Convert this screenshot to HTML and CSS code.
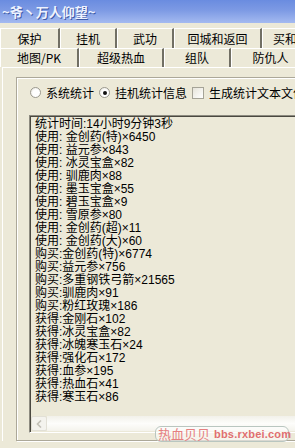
FILE: index.html
```html
<!DOCTYPE html>
<html lang="zh-CN">
<head>
    <meta charset="UTF-8">
    <meta name="viewport" content="width=device-width, initial-scale=1.0">
    <title>~爷丶万人仰望~</title>
    <link rel="stylesheet" href="styles.css">
</head>
<body>
    <div class="window">
        <div class="titlebar"><span class="title">~爷丶万人仰望~</span></div>

        <div class="tabs">
            <div class="tab-row row-top">
                <div class="tab">保护</div>
                <div class="tab">挂机</div>
                <div class="tab">武功</div>
                <div class="tab">回城和返回</div>
                <div class="tab">买和卖</div>
            </div>
            <div class="tab-row row-bottom">
                <div class="tab">地图/PK</div>
                <div class="tab">超级热血</div>
                <div class="tab">组队</div>
                <div class="tab">防仇人</div>
            </div>
        </div>

        <div class="panel">
            <div class="group">
                <div class="options">
                    <label class="option"><span class="radio"></span>系统统计</label>
                    <label class="option"><span class="radio checked"></span>挂机统计信息</label>
                    <label class="option"><span class="checkbox"></span>生成统计文本文件</label>
                </div>

                <div class="textbox">
                    <div class="lines">
                        <div>统计时间:14小时9分钟3秒</div>
                        <div>使用: 金创药(特)×6450</div>
                        <div>使用: 益元参×843</div>
                        <div>使用: 冰灵宝盒×82</div>
                        <div>使用: 驯鹿肉×88</div>
                        <div>使用: 墨玉宝盒×55</div>
                        <div>使用: 碧玉宝盒×9</div>
                        <div>使用: 雪原参×80</div>
                        <div>使用: 金创药(超)×11</div>
                        <div>使用: 金创药(大)×60</div>
                        <div>购买:金创药(特)×6774</div>
                        <div>购买:益元参×756</div>
                        <div>购买:多重钢铁弓箭×21565</div>
                        <div>购买:驯鹿肉×91</div>
                        <div>购买:粉红玫瑰×186</div>
                        <div>获得:金刚石×102</div>
                        <div>获得:冰灵宝盒×82</div>
                        <div>获得:冰魄寒玉石×24</div>
                        <div>获得:强化石×172</div>
                        <div>获得:血参×195</div>
                        <div>获得:热血石×41</div>
                        <div>获得:寒玉石×86</div>
                    </div>
                    <div class="hscroll">
                        <div class="scroll-btn">
                            <svg width="7" height="8" viewBox="0 0 7 8"><polyline points="5,0.5 1.5,4 5,7.5" fill="none" stroke="#c3c1b8" stroke-width="1.6"/></svg>
                        </div>
                        <div class="scroll-track"></div>
                    </div>
                </div>
            </div>
        </div>

        <div class="watermark"><span class="wm-cn">热血贝贝</span><span class="wm-url">bbs.rxbei.com</span></div>
    </div>
</body>
</html>
```

FILE: styles.css
```css
body {
    margin: 0;
    width: 295px;
    height: 448px;
    overflow: hidden;
    background: #ece9d8;
    font-family: "Noto Sans CJK SC", sans-serif;
    font-size: 12px;
    color: #000;
}

.window {
    position: relative;
    width: 295px;
    height: 448px;
    overflow: hidden;
}

.titlebar {
    height: 23px;
    display: flex;
    align-items: center;
    padding-left: 2px;
    background: linear-gradient(#6a8ce0, #7d9ae4 45%, #a4baf0);
}

.title {
    font-size: 13px;
    font-weight: bold;
    color: #eef3ff;
    text-shadow: 1px 1px 0 #3d5aa8;
    white-space: nowrap;
}

.tabs {
    margin-top: 5px;
}

.tab-row {
    display: grid;
    white-space: nowrap;
}

.row-top {
    height: 20px;
    grid-template-columns: 60px 57px 57px 88px 70px;
}

.row-bottom {
    height: 19px;
    grid-template-columns: 79px 85px 67px 80px;
}

.tab {
    display: flex;
    align-items: center;
    justify-content: center;
    border-top: 1px solid #fff;
    border-left: 1px solid #fff;
    border-right: 2px solid #716f64;
    line-height: 14px;
    overflow: hidden;
}

.row-top .tab:last-child {
    justify-content: flex-start;
    padding-left: 10px;
}

.panel {
    margin-left: 2px;
    border-top: 1px solid #fff;
    border-left: 1px solid #fff;
    padding: 9px 0 0 13px;
}

.group {
    width: 420px;
    height: 364px;
    border: 1px solid #aca899;
    box-shadow: inset 1px 1px 0 #fff, 1px 1px 0 #fff;
    padding: 8px 0 0 12px;
    box-sizing: border-box;
}

.options {
    display: flex;
    align-items: center;
    height: 13px;
    white-space: nowrap;
    margin-left: 1px;
}

.option {
    display: flex;
    align-items: center;
    gap: 5px;
    margin-right: 5px;
    line-height: 13px;
}

.radio {
    width: 11px;
    height: 11px;
    border-radius: 50%;
    box-sizing: border-box;
    border: 1px solid #9c9a90;
    background: radial-gradient(circle at 60% 60%, #fff 45%, #e2e0d6);
    display: flex;
    align-items: center;
    justify-content: center;
}

.radio.checked::after {
    content: "";
    width: 4px;
    height: 4px;
    border-radius: 50%;
    background: #111;
}

.checkbox {
    width: 12px;
    height: 12px;
    box-sizing: border-box;
    border: 1px solid #a5a397;
    background: linear-gradient(135deg, #e6e4da, #fff);
}

.textbox {
    margin-top: 16px;
    width: 400px;
    height: 318px;
    box-sizing: border-box;
    border-top: 1px solid #8d8b80;
    border-left: 1px solid #8d8b80;
    border-bottom: 1px solid #fff;
    border-right: 1px solid #fff;
    box-shadow: inset 1px 1px 0 #4a4840;
    display: flex;
    flex-direction: column;
}

.lines {
    flex: 1;
    padding: 2px 0 0 5px;
    font-family: "Liberation Sans", "Noto Sans CJK SC", sans-serif;
    line-height: 13px;
    white-space: nowrap;
    overflow: hidden;
}

.hscroll {
    height: 15px;
    display: flex;
    margin-left: 1px;
    margin-bottom: 1px;
}

.scroll-btn {
    width: 16px;
    box-sizing: border-box;
    border: 1px solid #e2e0d6;
    border-radius: 2px;
    background: #f4f3ee;
    display: flex;
    align-items: center;
    justify-content: center;
}

.scroll-track {
    flex: 1;
    background: linear-gradient(#f2f1ea, #fdfdfb 50%, #f4f3ec);
}

.watermark {
    position: absolute;
    left: 155px;
    top: 426px;
    width: 134px;
    height: 16px;
    box-sizing: border-box;
    border: 1px solid #b9c6c0;
    border-radius: 6px;
    background: rgba(255, 255, 255, 0.55);
    display: flex;
    align-items: center;
    gap: 4px;
    padding-left: 2px;
    white-space: nowrap;
}

.wm-cn {
    font-size: 13px;
    line-height: 14px;
    color: #e58080;
}

.wm-url {
    font-family: "Liberation Sans", sans-serif;
    font-size: 11px;
    font-weight: bold;
    letter-spacing: 0.2px;
    color: #e06f6f;
}
```
